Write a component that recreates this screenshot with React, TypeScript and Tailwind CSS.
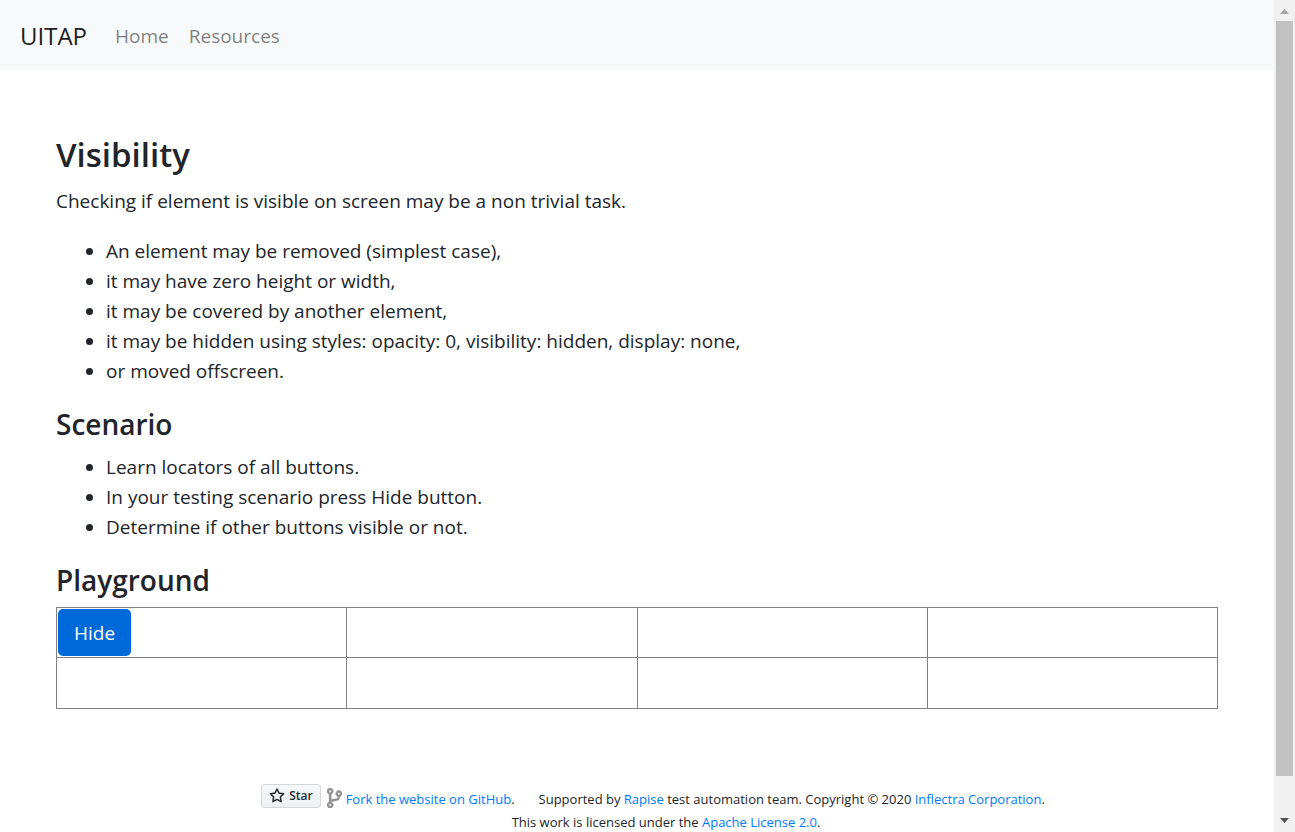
import type { ReactNode } from 'react';
import { useState } from 'react';

const checks = [
  'An element may be removed (simplest case),',
  'it may have zero height or width,',
  'it may be covered by another element,',
  'it may be hidden using styles: opacity: 0, visibility: hidden, display: none,',
  'or moved offscreen.',
];

const steps = [
  'Learn locators of all buttons.',
  'In your testing scenario press Hide button.',
  'Determine if other buttons visible or not.',
];

function FooterLink({ children }: { children: ReactNode }) {
  return (
    <a href="#" className="text-[#007bff] hover:underline">
      {children}
    </a>
  );
}

function BulletList({ items }: { items: string[] }) {
  return (
    <ul className="mb-5 list-disc pl-[50px]">
      {items.map((item) => (
        <li key={item}>{item}</li>
      ))}
    </ul>
  );
}

function StarIcon() {
  return (
    <svg viewBox="0 0 16 16" className="size-4" fill="currentColor" aria-hidden="true">
      <path
        fillRule="evenodd"
        d="M8 .25a.75.75 0 01.673.418l1.882 3.815 4.21.612a.75.75 0 01.416 1.279l-3.046 2.97.719 4.192a.75.75 0 01-1.088.791L8 12.347l-3.766 1.98a.75.75 0 01-1.088-.79l.72-4.194L.818 6.374a.75.75 0 01.416-1.28l4.21-.611L7.327.668A.75.75 0 018 .25zm0 2.445L6.615 5.5a.75.75 0 01-.564.41l-3.097.45 2.24 2.184a.75.75 0 01.216.664l-.528 3.084 2.769-1.456a.75.75 0 01.698 0l2.77 1.456-.53-3.084a.75.75 0 01.216-.664l2.24-2.183-3.096-.45a.75.75 0 01-.564-.41L8 2.694z"
      />
    </svg>
  );
}

function ForkIcon() {
  return (
    <svg
      viewBox="0 0 384 512"
      className="h-5 w-[15px] text-[#909090]"
      fill="currentColor"
      stroke="currentColor"
      strokeWidth="14"
      aria-hidden="true"
    >
      <path d="M384 144c0-44.200-35.800-80-80-80s-80 35.800-80 80c0 36.400 24.300 67.100 57.500 76.800-.6 16.100-4.200 28.500-11 36.900-15.400 19.200-49.300 22.400-85.200 25.700-28.200 2.600-57.400 5.400-81.300 16.900v-144c32.500-10.200 56-40.500 56-76.300 0-44.200-35.800-80-80-80S0 35.800 0 80c0 35.800 23.500 66.100 56 76.300v199.300C23.500 365.900 0 396.200 0 432c0 44.200 35.800 80 80 80s80-35.800 80-80c0-34-21.200-63.100-51.200-74.600 3.100-5.200 7.800-9.800 14.900-13.400 16.200-8.200 40.400-10.400 66.100-12.800 42.200-3.900 90-8.400 118.200-43.400 14-17.400 21.100-39.800 21.600-67.900 31.600-10.800 54.400-40.700 54.400-75.900zM80 48c17.600 0 32 14.400 32 32s-14.400 32-32 32-32-14.400-32-32 14.400-32 32-32zm0 416c-17.600 0-32-14.400-32-32s14.400-32 32-32 32 14.400 32 32-14.400 32-32 32zM304 112c17.600 0 32 14.400 32 32s-14.400 32-32 32-32-14.400-32-32 14.400-32 32-32z" />
    </svg>
  );
}

function ScrollTrack() {
  return (
    <div className="flex w-[21px] shrink-0 flex-col items-center bg-[#f1f1f1]" aria-hidden="true">
      <svg viewBox="0 0 21 21" className="size-[21px] shrink-0" fill="#a3a3a3">
        <path d="M6 14h9L10.500 9z" />
      </svg>
      <div className="w-[17px] grow bg-[#c1c1c1]" />
      <div className="h-[35px] shrink-0" />
      <svg viewBox="0 0 21 21" className="size-[21px] shrink-0" fill="#505050">
        <path d="M6 7h9l-4.500 5z" />
      </svg>
    </div>
  );
}

export default function App() {
  const [hidden, setHidden] = useState(false);

  return (
    <div className="flex h-screen bg-white font-['Segoe_UI','Open_Sans',sans-serif] text-[#212529]">
      <div className="min-w-0 flex-1 overflow-hidden">
        <nav className="flex h-[70px] items-center bg-[#f8f9fa] px-5 pt-0.5">
          <a href="#" className="mr-7 text-2xl text-black/90">
            UITAP
          </a>
          <div className="flex gap-5 text-[19px] text-black/50">
            <a href="#">Home</a>
            <a href="#">Resources</a>
          </div>
        </nav>

        <main className="mx-14 pt-[62px] text-[19px] leading-[30px]">
          <h3 className="mb-2 text-[33px] leading-[46px] font-semibold">Visibility</h3>
          <p className="mb-5">Checking if element is visible on screen may be a non trivial task.</p>
          <BulletList items={checks} />
          <h4 className="mb-2.5 text-[28px] leading-9 font-semibold">Scenario</h4>
          <BulletList items={steps} />
          <h4 className="mb-[9px] text-[28px] leading-9 font-semibold">Playground</h4>
          <table className="w-full table-fixed border-collapse">
            <tbody>
              {[0, 1].map((row) => (
                <tr key={row} className="h-[50px] last:h-[51px]">
                  {[0, 1, 2, 3].map((col) => (
                    <td key={col} className="border border-[#808080] p-px">
                      {row === 0 && col === 0 && (
                        <button
                          type="button"
                          aria-pressed={hidden}
                          onClick={() => setHidden(!hidden)}
                          className="block h-[47px] rounded-[5px] bg-[#0069d9] px-4 text-white"
                        >
                          Hide
                        </button>
                      )}
                    </td>
                  ))}
                </tr>
              ))}
            </tbody>
          </table>
        </main>

        <footer className="mt-[75px] ml-8 text-center text-[13px] leading-[23px]">
          <div className="flex items-start justify-center">
            <button
              type="button"
              className="flex h-6 items-center gap-1 rounded-[3px] border border-[#d5d8da] bg-linear-to-b from-[#f6f8fa] to-[#ebf0f4] px-[7px] text-xs font-semibold text-[#24292e]"
            >
              <StarIcon />
              Star
            </button>
            <span className="mt-1 mr-1 ml-1.5">
              <ForkIcon />
            </span>
            <span className="mt-1 mr-6">
              <FooterLink>Fork the website on GitHub</FooterLink>.
            </span>
            <span className="mt-1">
              Supported by <FooterLink>Rapise</FooterLink> test automation team. Copyright © 2020{' '}
              <FooterLink>Inflectra Corporation</FooterLink>.
            </span>
          </div>
          <p className="pl-[26px]">
            This work is licensed under the <FooterLink>Apache License 2.0</FooterLink>.
          </p>
        </footer>
      </div>
      <ScrollTrack />
    </div>
  );
}
